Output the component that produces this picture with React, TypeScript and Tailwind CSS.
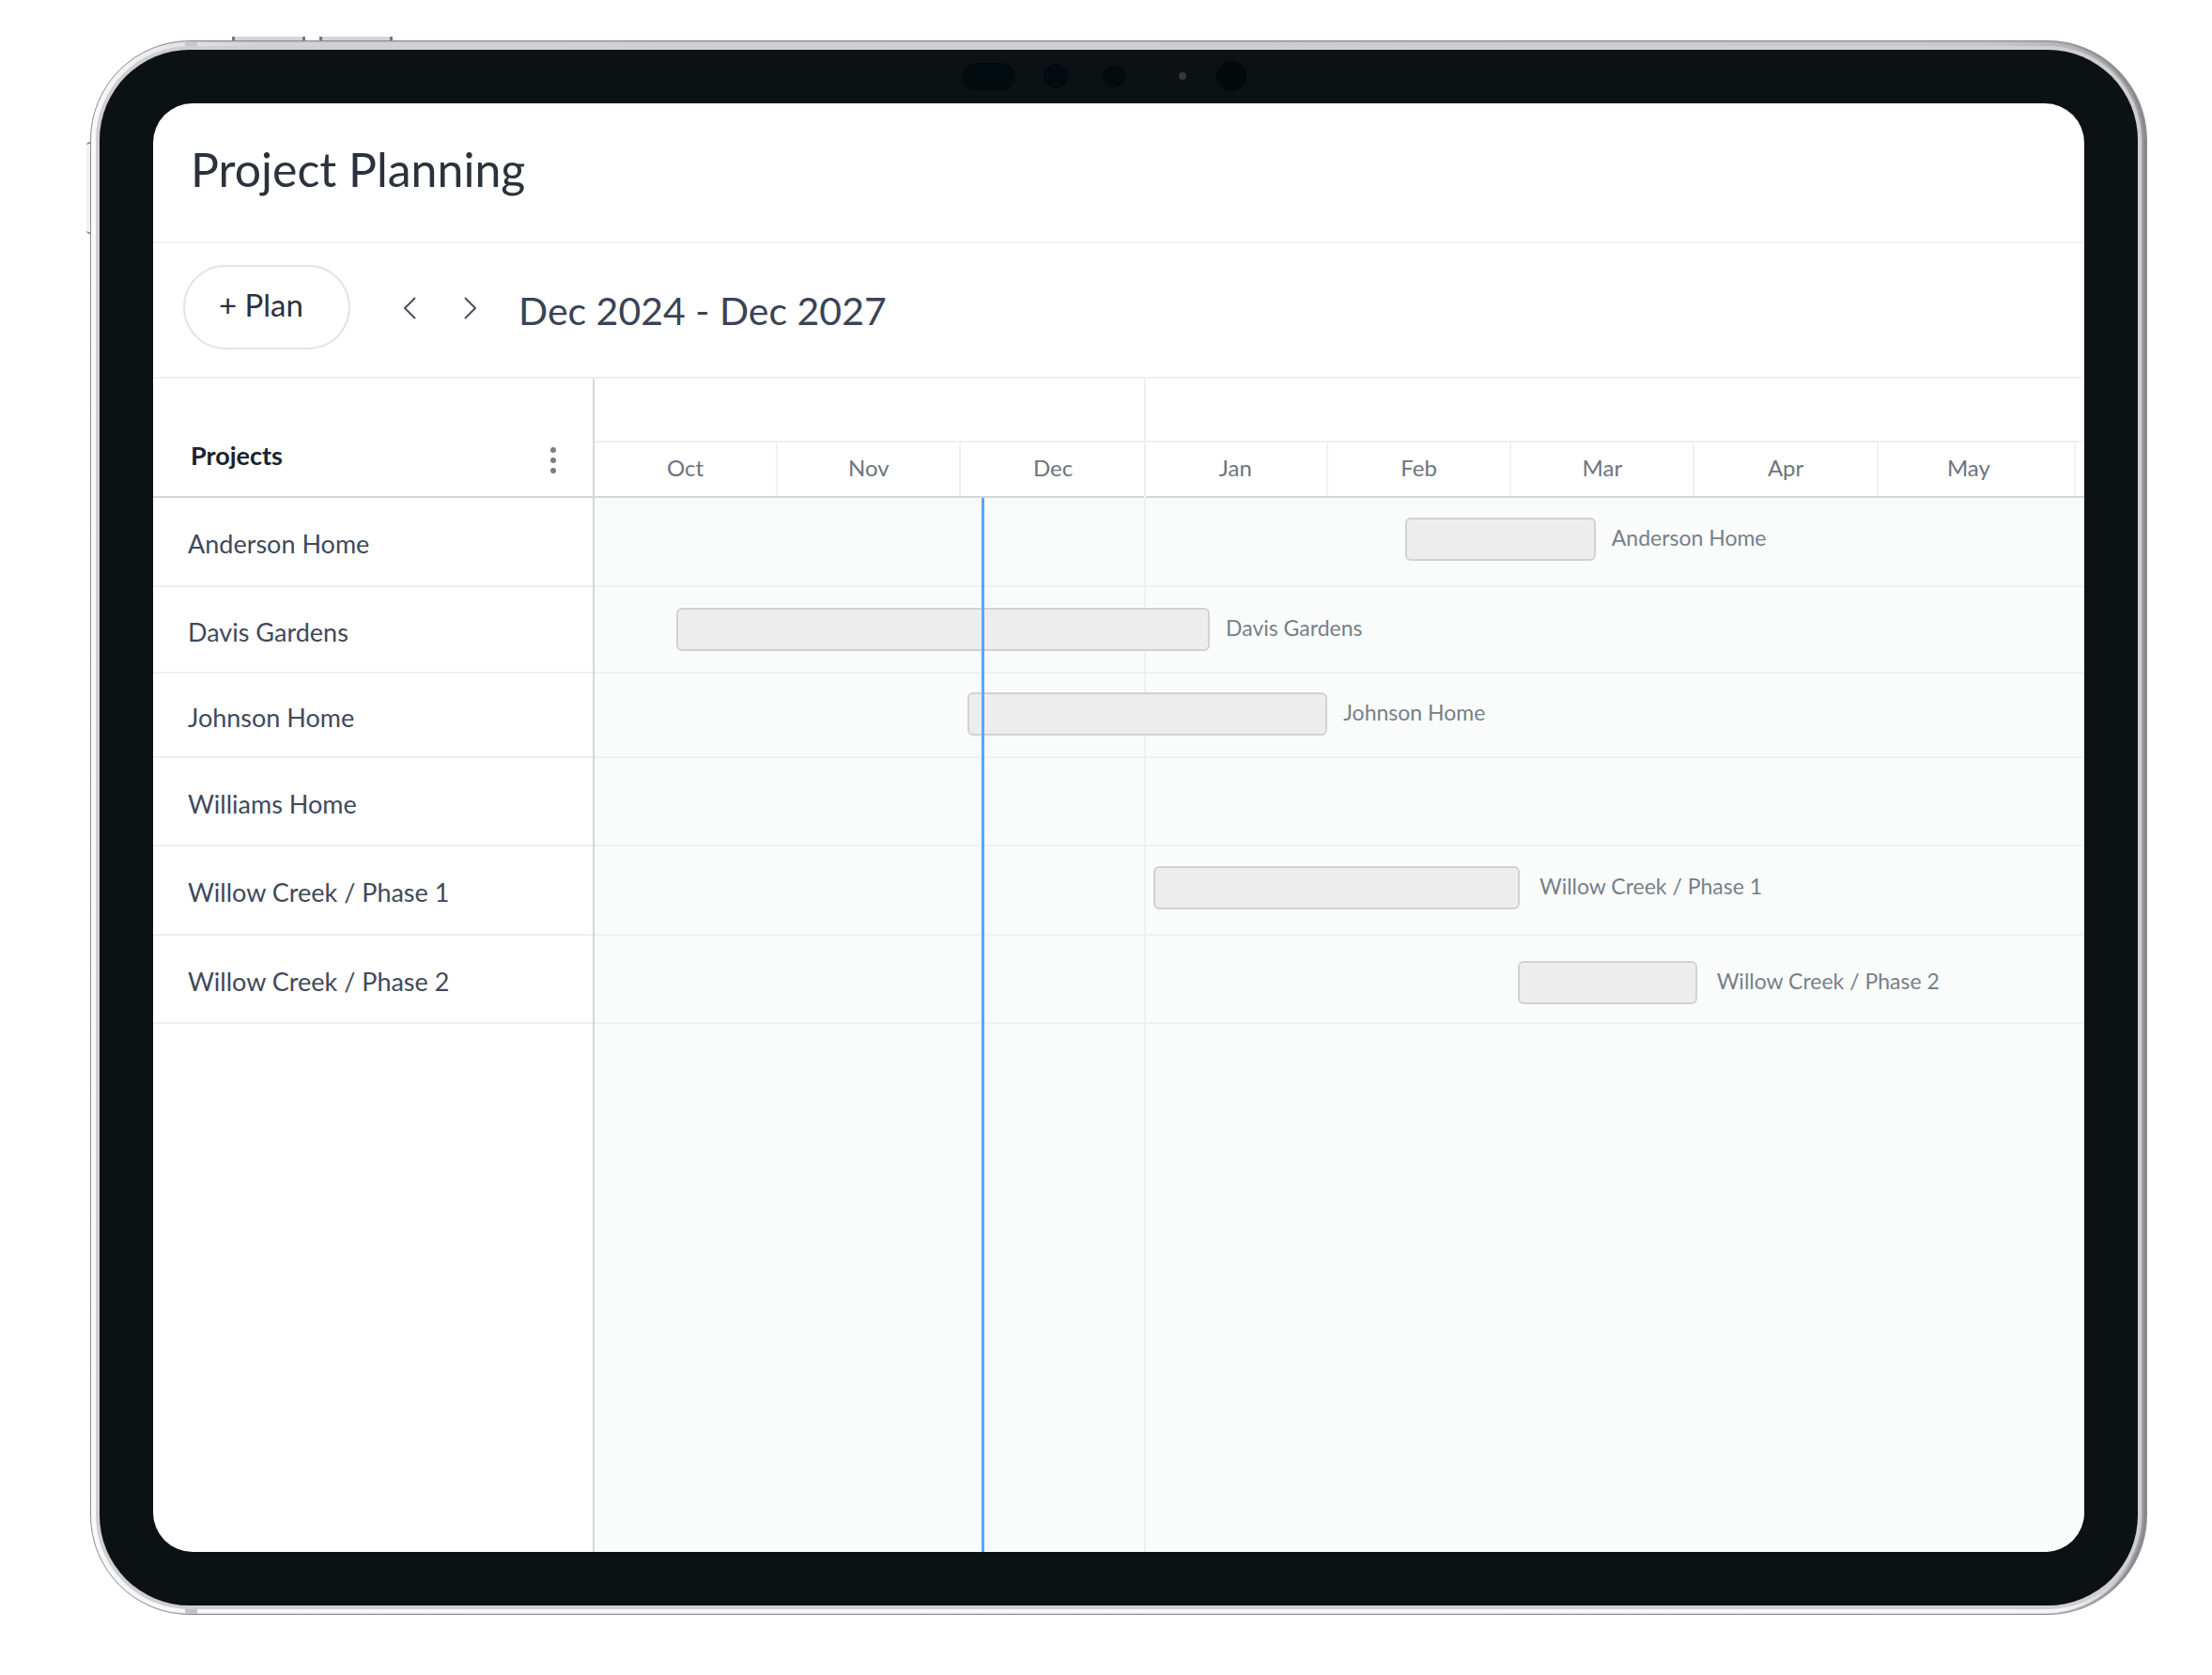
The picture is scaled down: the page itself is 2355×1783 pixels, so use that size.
import type { ReactNode } from "react";

const months = ["Oct", "Nov", "Dec", "Jan", "Feb", "Mar", "Apr", "May"];

// start and length are percentages of the visible timeline
const projects = [
  { name: "Anderson Home", row: "h-[95px]", bar: "pt-[21px] gap-[17px]", start: 54.4, length: 12.8 },
  { name: "Davis Gardens", row: "h-[92px]", bar: "pt-[22px] gap-[17px]", start: 5.5, length: 35.8 },
  { name: "Johnson Home", row: "h-[90px]", bar: "pt-[20px] gap-[17px]", start: 25, length: 24.2 },
  { name: "Williams Home", row: "h-[94px]", bar: "", start: 0, length: 0 },
  { name: "Willow Creek / Phase 1", row: "h-[95px]", bar: "pt-[21px] gap-[21px]", start: 37.5, length: 24.6 },
  { name: "Willow Creek / Phase 2", row: "h-[94px]", bar: "pt-[27px] gap-[21px]", start: 62, length: 12 },
];

function Frame({ children }: { children: ReactNode }) {
  return (
    <div className="relative flex min-h-[1676px] w-full rounded-[106px] border border-[#8b8b91] bg-[linear-gradient(to_top,#fafafb,transparent_60px),linear-gradient(to_right,#fafafb,#d3d2d8_8%,#cbc9ce_92%,#a3a2a6)] p-[9px] shadow-[inset_-3px_0_2px_#88878b]">
      {/* Side buttons */}
      <div className="absolute -top-[5px] left-[150px] h-1 w-[78px] border-x-[3px] border-[#77777b] bg-[#d5d5d7]" />
      <div className="absolute -top-[5px] left-[243px] h-1 w-[78px] border-x-[3px] border-[#77777b] bg-[#d5d5d7]" />
      <div className="absolute top-[107px] -left-[5px] h-[98px] w-1 rounded-l border-y-2 border-[#8b8b91] bg-[#f1f1f3]" />

      {/* Antenna bands */}
      <div className="absolute top-0 left-[100px] h-[9px] w-[13px] bg-[#c9c7ca]" />
      <div className="absolute bottom-0 left-[100px] h-[9px] w-[13px] bg-[#c3c3c6]" />

      <div className="relative flex w-full rounded-[96px] bg-[#0c1214] p-[57px] shadow-[0_0_0_4px_#cfced2]">
        {/* Camera and sensors */}
        <svg className="absolute top-[10px] left-1/2 -translate-x-1/2" width="340" height="36" viewBox="0 0 340 36">
          <rect x="4" y="4" width="56" height="29" rx="14" fill="#020b0d" />
          <circle cx="103" cy="18" r="13" fill="#030b10" />
          <circle cx="165" cy="18" r="12" fill="#020b0d" />
          <circle cx="238" cy="18" r="4" fill="#34383a" />
          <circle cx="290" cy="18" r="16" fill="#020a0c" />
        </svg>
        {children}
      </div>
    </div>
  );
}

function Toolbar() {
  return (
    <div className="flex h-36 shrink-0 items-center border-b-2 border-[#efefef] pb-1.5 pl-8">
      <button
        type="button"
        className="h-[90px] w-[178px] rounded-full border-2 border-[#e4e4e4] pr-3 pb-1 text-[33px] text-[#2b313c]"
      >
        + Plan
      </button>
      <button type="button" aria-label="Previous" className="ml-[43px] text-[#4a5060]">
        <svg width="42" height="42" viewBox="0 0 42 42" fill="none" stroke="currentColor" strokeWidth="2">
          <path d="M26 11 L15 22 L26 33" />
        </svg>
      </button>
      <button type="button" aria-label="Next" className="ml-[22px] text-[#4a5060]">
        <svg width="42" height="42" viewBox="0 0 42 42" fill="none" stroke="currentColor" strokeWidth="2">
          <path d="M15 11 L26 22 L15 33" />
        </svg>
      </button>
      <h2 className="ml-[30px] pt-2 text-[41px] text-[#3a4356]">Dec 2024 - Dec 2027</h2>
    </div>
  );
}

function ProjectList() {
  return (
    <div className="w-[470px] shrink-0 border-r-2 border-[#d6d8d9]">
      <div className="flex h-[127px] items-center justify-between border-b-2 border-[#d3d5d6] pt-11 pr-8 pl-10">
        <h3 className="pb-1 text-[27px] font-bold text-[#1b2230]">Projects</h3>
        <button type="button" aria-label="Project options" className="pt-1 text-[#7d7d7d]">
          <svg width="20" height="34" viewBox="0 0 20 34" fill="currentColor">
            <circle cx="10" cy="6" r="3" />
            <circle cx="10" cy="17" r="3" />
            <circle cx="10" cy="28" r="3" />
          </svg>
        </button>
      </div>
      <ul>
        {projects.map((project) => (
          <li
            key={project.name}
            className={`${project.row} flex items-center border-b-2 border-[#efefef] pt-1.5 pl-[37px] text-[27px] text-[#41495a]`}
          >
            {project.name}
          </li>
        ))}
      </ul>
    </div>
  );
}

function Timeline() {
  return (
    <div className="relative flex min-w-0 flex-1 flex-col">
      <div className="h-[68px] shrink-0 border-b-2 border-[#efefef]" />
      <div className="grid h-[59px] shrink-0 grid-cols-[repeat(7,390fr)_420fr_18fr] border-b-2 border-[#d3d5d6]">
        {months.map((month) => (
          <div
            key={month}
            className="flex items-center justify-center border-r-2 border-[#f1f1f1] pb-1 text-2xl text-[#6d747e] nth-3:border-r-0 last:pr-4"
          >
            {month}
          </div>
        ))}
      </div>

      <div className="relative flex-1 bg-[#fafcfb]">
        {projects.map((project) => (
          <div key={project.name} className={`${project.row} border-b-2 border-[#eff0f0]`}>
            {project.length > 0 && (
              <div className={`${project.bar} flex items-center`}>
                <div
                  className="relative z-10 h-[46px] shrink-0 rounded-md border-2 border-[#d0d2d2] bg-[#ededed]"
                  style={{ marginLeft: `${project.start}%`, width: `${project.length}%` }}
                />
                <span className="pb-1 text-[23px] whitespace-nowrap text-[#76808a]">{project.name}</span>
              </div>
            )}
          </div>
        ))}
        {/* Today */}
        <div className="absolute inset-y-0 left-[26%] z-20 w-[3px] bg-[#5aa5f5]" />
      </div>

      {/* Start of the year */}
      <div className="absolute inset-y-0 left-[36.9%] w-[2px] bg-[#eff1f0]" />
    </div>
  );
}

export default function App() {
  return (
    <main className="min-h-screen bg-white pt-[43px] pr-[69px] pb-16 pl-[96px] font-[Lato,sans-serif]">
      <Frame>
        <div className="flex min-w-0 flex-1 flex-col overflow-hidden rounded-[42px] bg-white">
          <header className="flex h-[149px] shrink-0 items-center border-b-2 border-[#f1f1f3] pb-1.5 pl-10">
            <h1 className="text-[50px] text-[#2c323d]">Project Planning</h1>
          </header>
          <Toolbar />
          <div className="flex flex-1">
            <ProjectList />
            <Timeline />
          </div>
        </div>
      </Frame>
    </main>
  );
}
